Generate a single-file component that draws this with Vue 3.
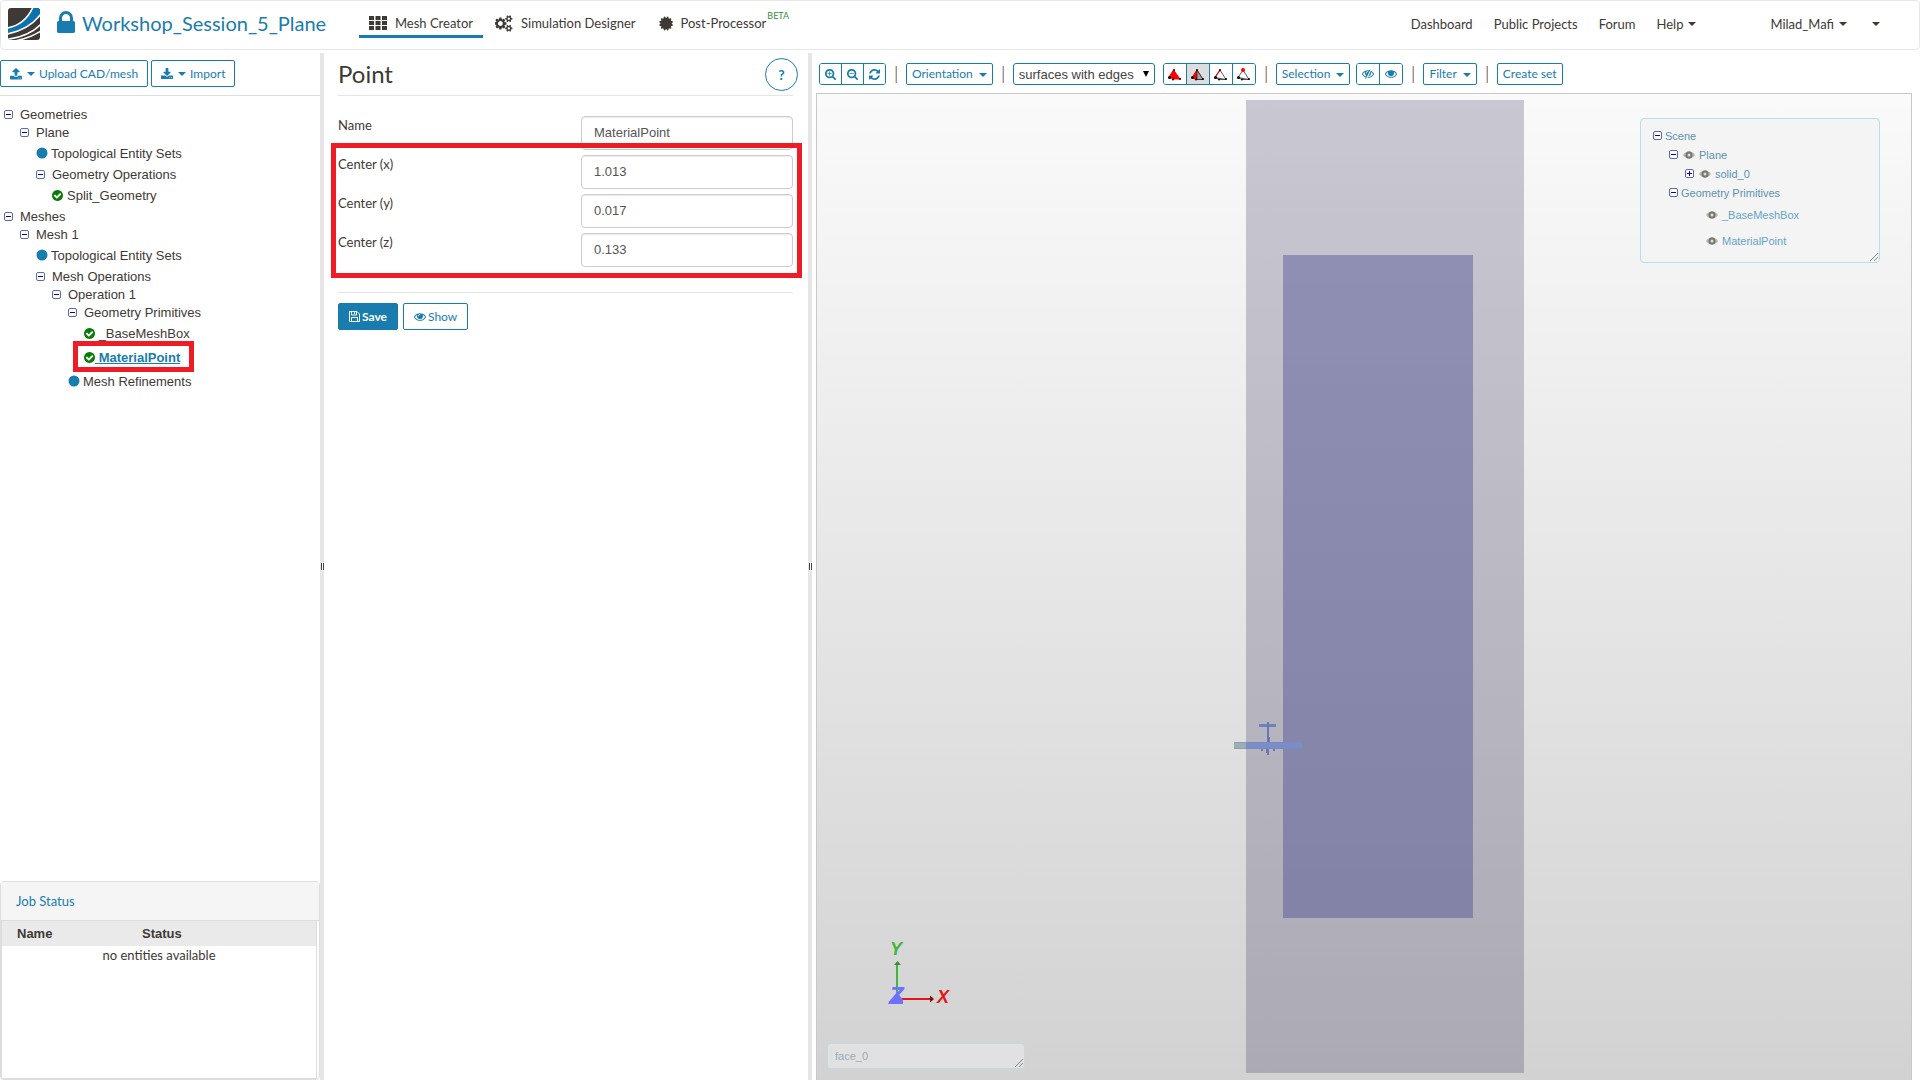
<script setup>
import { ref } from 'vue'

const icons = {
  lock: 'M640 768h512v-192q0-106-75-181t-181-75-181 75-75 181v192zm832 96v576q0 40-28 68t-68 28h-960q-40 0-68-28t-28-68v-576q0-40 28-68t68-28h32v-192q0-184 132-316t316-132 316 132 132 316v192h32q40 0 68 28t28 68z',
  cogs: 'M832 896q0-106-75-181t-181-75-181 75-75 181 75 181 181 75 181-75 75-181zm768 512q0-52-38-90t-90-38-90 38-38 90q0 53 37.5 90.5t90.5 37.5 90.5-37.5 37.5-90.5zm0-1024q0-52-38-90t-90-38-90 38-38 90q0 53 37.5 90.5t90.5 37.5 90.5-37.5 37.5-90.5zm-384 421v185q0 10-7 19.5t-16 10.5l-155 24q-11 35-32 76 34 48 90 115 7 11 7 20 0 12-7 19-23 30-82.5 89.5t-78.5 59.5q-11 0-21-7l-115-90q-37 19-77 31-11 108-23 155-7 24-30 24h-186q-11 0-20-7.5t-10-17.5l-23-153q-34-10-75-31l-118 89q-7 7-20 7-11 0-21-8-144-133-144-160 0-9 7-19 10-14 41-53t47-61q-23-44-35-82l-152-24q-10-1-17-9.5t-7-19.5v-185q0-10 7-19.5t16-10.5l155-24q11-35 32-76-34-48-90-115-7-11-7-20 0-12 7-20 22-30 82-89t79-59q11 0 21 7l115 90q34-18 77-32 11-108 23-154 7-24 30-24h186q11 0 20 7.5t10 17.5l23 153q34 10 75 31l118-89q8-7 20-7 11 0 21 8 144 133 144 160 0 8-7 19-12 16-42 54t-45 60q23 48 34 82l152 23q10 2 17 10.5t7 19.5zm640 533v140q0 16-149 31-12 27-30 52 51 113 51 138 0 4-4 7-122 71-124 71-8 0-46-47t-52-68q-20 2-30 2t-30-2q-14 21-52 68t-46 47q-2 0-124-71-4-3-4-7 0-25 51-138-18-25-30-52-149-15-149-31v-140q0-16 149-31 13-29 30-52-51-113-51-138 0-4 4-7 4-2 35-20t59-34 30-16q8 0 46 46.5t52 67.5q20-2 30-2t30 2q51-71 92-112l6-2q4 0 124 70 4 3 4 7 0 25-51 138 17 23 30 52 149 15 149 31zm0-1024v140q0 16-149 31-12 27-30 52 51 113 51 138 0 4-4 7-122 71-124 71-8 0-46-47t-52-68q-20 2-30 2t-30-2q-14 21-52 68t-46 47q-2 0-124-71-4-3-4-7 0-25 51-138-18-25-30-52-149-15-149-31v-140q0-16 149-31 13-29 30-52-51-113-51-138 0-4 4-7 4-2 35-20t59-34 30-16q8 0 46 46.5t52 67.5q20-2 30-2t30 2q51-71 92-112l6-2q4 0 124 70 4 3 4 7 0 25-51 138 17 23 30 52 149 15 149 31z',
  certificate: 'M1568 896l138 135q30 28 20 70-12 41-52 51l-188 48 53 186q12 41-19 70-29 31-70 19l-186-53-48 188q-10 40-51 52-12 2-19 2-31 0-51-22l-135-138-135 138q-28 30-70 20-41-11-51-52l-48-188-186 53q-41 12-70-19-31-29-19-70l53-186-188-48q-40-10-52-51-10-42 20-70l138-135-138-135q-30-28-20-70 12-41 52-51l188-48-53-186q-12-41 19-70 29-31 70-19l186 53 48-188q10-41 51-51 41-12 70 19l135 139 135-139q29-30 70-19 41 10 51 51l48 188 186-53q41-12 70 19 31 29 19 70l-53 186 188 48q40 10 52 51 10 42-20 70z',
  upload: 'M1344 1472q0-26-19-45t-45-19-45 19-19 45 19 45 45 19 45-19 19-45zm256 0q0-26-19-45t-45-19-45 19-19 45 19 45 45 19 45-19 19-45zm128-224v320q0 40-28 68t-68 28h-1472q-40 0-68-28t-28-68v-320q0-40 28-68t68-28h427q21 56 70.5 92t110.5 36h256q61 0 110.5-36t70.5-92h427q40 0 68 28t28 68zm-325-648q-17 40-59 40h-256v448q0 26-19 45t-45 19h-256q-26 0-45-19t-19-45v-448h-256q-42 0-59-40-17-39 14-69l448-448q18-19 45-19t45 19l448 448q31 30 14 69z',
  download: 'M1344 1344q0-26-19-45t-45-19-45 19-19 45 19 45 45 19 45-19 19-45zm256 0q0-26-19-45t-45-19-45 19-19 45 19 45 45 19 45-19 19-45zm128-224v320q0 40-28 68t-68 28h-1472q-40 0-68-28t-28-68v-320q0-40 28-68t68-28h465l135 136q58 56 136 56t136-56l136-136h464q40 0 68 28t28 68zm-325-569q17 41-14 70l-448 448q-18 19-45 19t-45-19l-448-448q-31-29-14-70 17-39 59-39h256v-448q0-26 19-45t45-19h256q26 0 45 19t19 45v448h256q42 0 59 39z',
  eye: 'M1664 960q-152-236-381-353 61 104 61 225 0 185-131.5 316.5t-316.5 131.5-316.5-131.5-131.5-316.5q0-121 61-225-229 117-381 353 133 205 333.5 326.5t434.5 121.5 434.5-121.5 333.5-326.5zm-720-384q0-20-14-34t-34-14q-125 0-214.5 89.5t-89.5 214.5q0 20 14 34t34 14 34-14 14-34q0-86 61-147t147-61q20 0 34-14t14-34zm848 384q0 34-20 69-140 230-376.5 368.5t-499.5 138.5-499.5-139-376.5-368q-20-35-20-69t20-69q140-229 376.5-368t499.5-139 499.5 139 376.5 368q20 35 20 69z',
  refresh: 'M1639 1056q0 5-1 7-64 268-268 434.5t-478 166.5q-146 0-282.5-55t-243.5-157l-129 129q-19 19-45 19t-45-19-19-45v-448q0-26 19-45t45-19h448q26 0 45 19t19 45-19 45l-137 137q71 66 161 102t187 36q134 0 250-65t186-179q11-17 53-117 8-23 30-23h192q13 0 22.5 9.5t9.5 22.5zm25-800v448q0 26-19 45t-45 19h-448q-26 0-45-19t-19-45 19-45l138-138q-148-137-349-137-134 0-250 65t-186 179q-11 17-53 117-8 23-30 23h-199q-13 0-22.5-9.5t-9.5-22.5v-7q65-268 270-434.5t480-166.5q146 0 284 55.5t245 156.5l130-129q19-19 45-19t45 19 19 45z',
  zoomIn: 'M1088 800v64q0 13-9.5 22.5t-22.5 9.5h-224v224q0 13-9.5 22.5t-22.5 9.5h-64q-13 0-22.5-9.5t-9.5-22.5v-224h-224q-13 0-22.5-9.5t-9.5-22.5v-64q0-13 9.5-22.5t22.5-9.5h224v-224q0-13 9.5-22.5t22.5-9.5h64q13 0 22.5 9.5t9.5 22.5v224h224q13 0 22.5 9.5t9.5 22.5zm128 32q0-185-131.5-316.5t-316.5-131.5-316.5 131.5-131.5 316.5 131.5 316.5 316.5 131.5 316.5-131.5 131.5-316.5zm512 832q0 53-37.5 90.5t-90.5 37.5q-54 0-90-38l-343-342q-179 124-399 124-143 0-273.5-55.5t-225-150-150-225-55.5-273.5 55.5-273.5 150-225 225-150 273.5-55.5 273.5 55.5 225 150 150 225 55.5 273.5q0 220-124 399l343 343q37 37 37 90z',
  zoomOut: 'M1088 800v64q0 13-9.5 22.5t-22.5 9.5h-576q-13 0-22.5-9.5t-9.5-22.5v-64q0-13 9.5-22.5t22.5-9.5h576q13 0 22.5 9.5t9.5 22.5zm128 32q0-185-131.5-316.5t-316.5-131.5-316.5 131.5-131.5 316.5 131.5 316.5 316.5 131.5 316.5-131.5 131.5-316.5zm512 832q0 53-37.5 90.5t-90.5 37.5q-54 0-90-38l-343-342q-179 124-399 124-143 0-273.5-55.5t-225-150-150-225-55.5-273.5 55.5-273.5 150-225 225-150 273.5-55.5 273.5 55.5 225 150 150 225 55.5 273.5q0 220-124 399l343 343q37 37 37 90z',
  check: 'M1412 734q0-28-18-46l-91-90q-19-19-45-19t-45 19l-408 407-226-226q-19-19-45-19t-45 19l-91 90q-18 18-18 46 0 27 18 45l362 362q19 19 45 19 27 0 46-19l543-543q18-18 18-45zm252 162q0 209-103 385.5t-279.5 279.5-385.5 103-385.5-103-279.5-279.5-103-385.5 103-385.5 279.5-279.5 385.5-103 385.5 103 279.5 279.5 103 385.5z',
}

const tree = [
  { label: 'Geometries', level: 0, kind: 'folder' },
  { label: 'Plane', level: 1, kind: 'folder' },
  { label: 'Topological Entity Sets', level: 2, kind: 'dot' },
  { label: 'Geometry Operations', level: 2, kind: 'folder' },
  { label: 'Split_Geometry', level: 3, kind: 'check' },
  { label: 'Meshes', level: 0, kind: 'folder' },
  { label: 'Mesh 1', level: 1, kind: 'folder' },
  { label: 'Topological Entity Sets', level: 2, kind: 'dot' },
  { label: 'Mesh Operations', level: 2, kind: 'folder' },
  { label: 'Operation 1', level: 3, kind: 'folder' },
  { label: 'Geometry Primitives', level: 4, kind: 'folder' },
  { label: '_BaseMeshBox', level: 5, kind: 'check' },
  { label: 'MaterialPoint', level: 5, kind: 'check', selected: true },
  { label: 'Mesh Refinements', level: 4, kind: 'dot' },
]

const scene = [
  { label: 'Scene', level: 0, toggle: 'minus' },
  { label: 'Plane', level: 1, toggle: 'minus', eye: true },
  { label: 'solid_0', level: 2, toggle: 'plus', eye: true },
  { label: 'Geometry Primitives', level: 1, toggle: 'minus' },
  { label: '_BaseMeshBox', level: 2, eye: true, leaf: true },
  { label: 'MaterialPoint', level: 2, eye: true, leaf: true },
]

const name = ref('MaterialPoint')
const center = ref([
  { axis: 'x', value: '1.013' },
  { axis: 'y', value: '0.017' },
  { axis: 'z', value: '0.133' },
])
const mode = ref('surfaces with edges')
const picks = ['volume', 'face', 'edge', 'vertex']
const pick = ref('face')
</script>

<template>
  <div class="app">
    <header class="topbar">
      <svg class="logo" viewBox="0 0 32 32" aria-hidden="true">
        <defs><clipPath id="logo-clip"><rect width="32" height="32" rx="3" /></clipPath></defs>
        <g clip-path="url(#logo-clip)">
          <rect width="32" height="32" fill="#3e3935" />
          <path d="M0 20Q17 17 25 0H33V6Q21 21 0 25Z" fill="#0b74b0" />
          <path d="M-1 20Q17 17 25 -1M-1 26Q21 22 33 6M-1 31.500Q22 28 33 16M7 33Q22 30 33 23" fill="none" stroke="#fff" stroke-width="1.600" />
        </g>
      </svg>
      <svg class="lock" viewBox="320 128 1152 1408" aria-hidden="true"><path :d="icons.lock" /></svg>
      <a class="project" href="#">Workshop_Session_5_Plane</a>

      <nav class="tabs">
        <a class="tab active" href="#">
          <svg width="18" height="14" viewBox="0 0 18 14" aria-hidden="true"><path d="M0 0h5v4H0zM6.500 0h5v4h-5zM13 0h5v4h-5zM0 5h5v4H0zM6.500 5h5v4h-5zM13 5h5v4h-5zM0 10h5v4H0zM6.500 10h5v4h-5zM13 10h5v4h-5z" /></svg>
          <span>Mesh Creator</span>
        </a>
        <a class="tab" href="#">
          <svg width="18" height="17" viewBox="0 0 1920 1792" aria-hidden="true"><path :d="icons.cogs" /></svg>
          <span>Simulation Designer</span>
        </a>
        <a class="tab" href="#">
          <svg width="15" height="15" viewBox="64 64 1664 1664" aria-hidden="true"><path :d="icons.certificate" /></svg>
          <span>Post-Processor</span><span class="beta">BETA</span>
        </a>
      </nav>

      <nav class="links">
        <a href="#">Dashboard</a>
        <a href="#">Public Projects</a>
        <a href="#">Forum</a>
        <a href="#" class="help-link">Help<i class="caret"></i></a>
        <a href="#">Milad_Mafi<i class="caret"></i></a>
        <a href="#" class="more" aria-label="More"><i class="caret"></i></a>
      </nav>
    </header>

    <main class="workspace">
      <aside class="sidebar">
        <div class="side-actions">
          <button class="btn" type="button">
            <svg width="12" height="12" viewBox="64 64 1664 1664" aria-hidden="true"><path :d="icons.upload" /></svg><i class="caret"></i>Upload CAD/mesh
          </button>
          <button class="btn" type="button">
            <svg width="12" height="12" viewBox="64 0 1664 1664" aria-hidden="true"><path :d="icons.download" /></svg><i class="caret"></i>Import
          </button>
        </div>
        <ul class="tree">
          <li v-for="(node, i) in tree" :key="i" :class="node.kind" :style="{ paddingLeft: node.level * 16 + 'px' }">
            <svg v-if="node.kind === 'folder'" class="toggle" viewBox="0 0 9 9" aria-hidden="true">
              <rect x=".5" y=".5" width="8" height="8" rx="1.500" /><path d="M2 4.500h5" />
            </svg>
            <svg v-else-if="node.kind === 'dot'" class="mark dot-mark" viewBox="0 0 12 12" aria-hidden="true"><circle cx="6" cy="6" r="5.500" /></svg>
            <svg v-else class="mark check-mark" viewBox="128 128 1536 1536" aria-hidden="true"><path :d="icons.check" /></svg>
            <a href="#" :class="{ selected: node.selected }"><span v-if="node.level === 5">&nbsp;</span>{{ node.label }}</a>
            <i v-if="node.selected" class="callout"></i>
          </li>
        </ul>
        <section class="jobs">
          <h2>Job Status</h2>
          <div class="jobs-body">
            <table>
              <thead><tr><th class="col-name">Name</th><th>Status</th></tr></thead>
              <tbody><tr><td colspan="2">no entities available</td></tr></tbody>
            </table>
          </div>
        </section>
      </aside>

      <div class="splitter"><i></i></div>

      <section class="editor">
        <div class="editor-head">
          <h1>Point</h1>
          <button class="help" type="button">?</button>
        </div>
        <form @submit.prevent>
          <div class="field">
            <label for="name">Name</label>
            <input id="name" v-model="name" type="text" />
          </div>
          <div class="center-fields">
            <div v-for="c in center" :key="c.axis" class="field">
              <label :for="'center-' + c.axis">Center ({{ c.axis }})</label>
              <input :id="'center-' + c.axis" v-model="c.value" type="text" />
            </div>
            <i class="callout"></i>
          </div>
          <div class="form-actions">
            <button class="btn primary" type="submit">
              <svg width="11" height="11" viewBox="0 0 11 11" aria-hidden="true"><path d="M.5.5h7.500l2.500 2.500v7.500H.5zM2.500.5v3.500h5V.5M5.500 1v2M2.500 10.500v-4h6v4" fill="none" stroke="#fff" /></svg>Save
            </button>
            <button class="btn show" type="button">
              <svg width="12" height="12" viewBox="0 64 1792 1792" aria-hidden="true"><path :d="icons.eye" /></svg>Show
            </button>
          </div>
        </form>
      </section>

      <div class="splitter"><i></i></div>

      <section class="viewer">
        <div class="toolbar">
          <div class="group zooms">
            <button type="button" aria-label="Zoom in"><svg viewBox="64 128 1664 1664"><path :d="icons.zoomIn" /></svg></button>
            <button type="button" aria-label="Zoom out"><svg viewBox="64 128 1664 1664"><path :d="icons.zoomOut" /></svg></button>
            <button type="button" aria-label="Reset"><svg viewBox="128 128 1536 1536"><path :d="icons.refresh" /></svg></button>
          </div>
          <i class="sep"></i>
          <button class="btn small" type="button">Orientation<i class="caret"></i></button>
          <i class="sep"></i>
          <div class="select">
            <select v-model="mode" aria-label="Render mode">
              <option>surfaces with edges</option>
              <option>surfaces</option>
              <option>wireframe</option>
            </select>
            <svg width="8" height="8" viewBox="0 0 8 8" aria-hidden="true"><path d="M0 0h8L4 8z" /></svg>
          </div>
          <div class="group picks">
            <button v-for="p in picks" :key="p" type="button" :class="{ on: p === pick }" :aria-label="'Pick ' + p" @click="pick = p">
              <svg viewBox="0 0 13 13" aria-hidden="true">
                <path v-if="p === 'volume'" d="M5.500 2L12 11H5L1 9z" fill="#f00" stroke="#f00" />
                <path v-else d="M6 2L12 11.500L5 11.500L1 9.500L6 2M1 9.500L12 11.500" fill="#fff" stroke="#333" stroke-width=".8" />
                <path v-if="p === 'face'" d="M6 2L1.500 9.500L6 11.500z" fill="#f00" stroke="#f00" />
                <path v-if="p === 'face'" d="M6 2V11.500L12 11.500z" fill="#aaa" stroke="#222" stroke-width=".8" />
                <path v-if="p === 'edge'" d="M6 2L1 9.500" stroke="#f00" stroke-width="1.200" />
                <circle cx="6" cy="2" :r="p === 'vertex' ? 2 : 1" :fill="p === 'vertex' ? '#f00' : '#000'" />
                <circle cx="1.500" cy="9.500" r="1.500" /><circle cx="5" cy="11.500" r="1" /><circle cx="12" cy="11" r="1" />
              </svg>
            </button>
          </div>
          <i class="sep"></i>
          <button class="btn small" type="button">Selection<i class="caret"></i></button>
          <div class="group eyes">
            <button type="button" aria-label="Hide selection"><svg viewBox="0 64 1792 1792"><path :d="icons.eye" /><path d="M1340 260L640 1660" stroke="#fff" stroke-width="200" /><path d="M1200 300L520 1640" stroke="#187cae" stroke-width="130" /></svg></button>
            <button type="button" aria-label="Show all"><svg viewBox="0 64 1792 1792"><path :d="icons.eye" /><circle cx="896" cy="860" r="370" /></svg></button>
          </div>
          <i class="sep"></i>
          <button class="btn small" type="button">Filter<i class="caret"></i></button>
          <i class="sep"></i>
          <button class="btn small" type="button">Create set</button>
        </div>

        <div class="canvas">
          <svg class="model" viewBox="0 0 1094 986" aria-label="Mesh view">
            <rect x="429" y="6" width="278" height="973" fill="#3a3860" fill-opacity=".26" />
            <rect x="466" y="161" width="190" height="663" fill="#41418c" fill-opacity=".4" />
            <g>
              <rect x="417" y="648" width="12" height="7" fill="#9aafb3" />
              <rect x="429" y="648" width="56" height="7" fill="#7b8dc8" />
              <path d="M417 648.500h68M417 654.500h68" stroke="#7886a8" stroke-opacity=".4" />
              <rect x="442" y="630" width="17" height="3" fill="#7080ba" />
              <path d="M450 628h2v15h1v5h-3zM449 655h3v6h-2v-2h-1z" fill="#6878b4" />
              <path d="M444 655h2v2h-2zM456 655h2v2h-2z" fill="#6878b4" />
            </g>
            <g class="axes">
              <path d="M80 905V870" stroke="#3cb83c" stroke-width="2" />
              <path d="M77 871l3.500-4 3.500 4z" fill="#3a8a3a" />
              <path d="M84 905h30" stroke="#e01818" stroke-width="2" />
              <path d="M113 901.500l4 3.500-4 3.500z" fill="#7a1010" />
              <path d="M80 898l6 8v4H71z" fill="#7070ff" />
              <text x="73" y="861" fill="#3cb83c">Y</text>
              <text x="120" y="909" fill="#e01818">X</text>
              <text class="z" x="72" y="910" fill="#7070ff">Z</text>
            </g>
          </svg>
          <div class="scene">
            <ul>
              <li v-for="(node, i) in scene" :key="i" :class="{ leaf: node.leaf }" :style="{ paddingLeft: node.level * 16 + 'px' }">
                <svg v-if="node.toggle" class="toggle" viewBox="0 0 9 9" aria-hidden="true">
                  <rect x=".5" y=".5" width="8" height="8" rx="1.500" /><path :d="node.toggle === 'plus' ? 'M2 4.500h5M4.500 2v5' : 'M2 4.500h5'" />
                </svg>
                <svg v-if="node.eye" class="eye" viewBox="0 0 12 8" aria-hidden="true"><path d="M0 4Q6 -3.500 12 4Q6 11.500 0 4Z" fill="#b5b5aa" /><circle cx="6" cy="4" r="2.500" fill="#ddd" stroke="#77776d" stroke-width="2" /></svg>
                <a href="#">{{ node.label }}</a>
              </li>
            </ul>
            <svg class="grip" viewBox="0 0 8 8" aria-hidden="true"><path d="M0 8L8 0M4 8L8 4" /></svg>
          </div>
          <div class="picked">
            face_0
            <svg class="grip" viewBox="0 0 8 8" aria-hidden="true"><path d="M0 8L8 0M4 8L8 4" /></svg>
          </div>
        </div>
      </section>
    </main>
  </div>
</template>

<style>
body {
  margin: 0;
  background: #fff;
}
</style>

<style scoped>
.app {
  display: flex;
  flex-direction: column;
  height: 100vh;
  overflow: hidden;
  font-family: Lato, "Liberation Sans", sans-serif;
  font-size: 13px;
  color: #3e3935;
}
.app *, .app *::before {
  box-sizing: border-box;
}
a {
  color: inherit;
  text-decoration: none;
}
button, input, select {
  font-family: inherit;
  margin: 0;
}
ul {
  list-style: none;
  margin: 0;
  padding: 0;
}
svg {
  flex: none;
  display: block;
}
.caret {
  display: inline-block;
  flex: none;
  border: 4px solid transparent;
  border-top-color: currentColor;
  border-bottom: 0;
}

.topbar {
  display: flex;
  align-items: flex-start;
  flex: none;
  height: 50px;
  padding: 7px 39px 0 7px;
  border: 1px solid #e7e7e7;
  border-radius: 4px;
}
.logo {
  width: 32px;
  height: 32px;
}
.lock {
  width: 18px;
  height: 22px;
  margin: 3px 7px 0 17px;
  fill: #187cae;
}
.project {
  width: 277px;
  font-size: 20px;
  line-height: 30px;
  color: #187cae;
}
.tabs {
  display: flex;
  gap: 2px;
}
.tab {
  display: flex;
  align-items: center;
  gap: 8px;
  height: 30px;
  padding: 3px 10px 0;
  border-bottom: 3px solid transparent;
  line-height: 24px;
}
.tab svg {
  fill: #3e3935;
}
.tab.active {
  border-bottom-color: #187cae;
}
.beta {
  align-self: flex-start;
  margin: -2px 0 0 -7px;
  font-size: 9px;
  line-height: 14px;
  color: #3c8a3c;
}
.links {
  display: flex;
  gap: 21px;
  margin-left: auto;
  line-height: 32px;
}
.links a {
  display: flex;
  align-items: center;
  gap: 5px;
}
.help-link {
  margin-right: 53px;
}
.more {
  margin-left: 4px;
}

.workspace {
  display: flex;
  flex: 1;
  min-height: 0;
  padding-top: 3px;
}
.sidebar {
  display: flex;
  flex-direction: column;
  flex: 0 0 320px;
}
.side-actions {
  display: flex;
  gap: 3px;
  padding: 7px 0 8px;
  border-bottom: 1px solid #ddd;
}
.btn {
  display: flex;
  align-items: center;
  height: 27px;
  padding: 0 10px;
  border: 1px solid #187cae;
  border-radius: 2px;
  background: #fff;
  color: #187cae;
  font-size: 12px;
  line-height: 18px;
  white-space: nowrap;
}
.btn svg {
  fill: currentColor;
}
.side-actions .btn {
  padding: 0 9px;
}
.side-actions .caret {
  margin: 1px 4px 0 5px;
}

.tree {
  padding: 9px 0 0 4px;
  font: 13px "Liberation Sans", Arial, sans-serif;
}
.tree li {
  position: relative;
  display: flex;
  align-items: center;
  height: 24px;
  width: max-content;
}
.tree .folder {
  height: 18px;
}
.toggle {
  width: 9px;
  height: 9px;
  margin-right: 7px;
  fill: #fff;
  stroke: #5a6ab0;
}
.toggle path {
  stroke: #0000c8;
}
.mark {
  width: 11px;
  height: 11px;
  margin-right: 4px;
}
.dot-mark {
  width: 12px;
  height: 12px;
  margin-right: 3px;
  fill: #187cae;
}
.check-mark {
  fill: #087c08;
}
.tree li a span {
  margin-left: -4px;
}
.tree .selected {
  color: #187cae;
  font-weight: bold;
  text-decoration: underline;
}
.callout {
  position: absolute;
  border: 5px solid #ee1c25;
  pointer-events: none;
}
.tree .callout {
  inset: -4px -14px -3px 69px;
}

.jobs {
  display: flex;
  flex-direction: column;
  height: 199px;
  margin-top: auto;
  border: 1px solid #ddd;
  border-radius: 4px;
}
.jobs h2 {
  flex: none;
  height: 39px;
  margin: 0;
  padding-left: 15px;
  border-bottom: 1px solid #ddd;
  background: #f5f5f5;
  color: #187cae;
  font-size: 13px;
  font-weight: normal;
  line-height: 38px;
}
.jobs-body {
  flex: 1;
  margin-right: 2px;
  border: 1px solid #ddd;
  border-top-width: 0;
}
.jobs table {
  width: 100%;
  border-collapse: collapse;
}
.jobs th {
  height: 25px;
  padding: 0;
  background: #eaeaea;
  font: bold 13px "Liberation Sans", Arial, sans-serif;
  text-align: left;
}
.jobs .col-name {
  width: 140px;
  padding-left: 15px;
}
.jobs td {
  padding: 0;
  line-height: 18px;
  text-align: center;
}

.splitter {
  display: flex;
  align-items: center;
  flex: 0 0 4px;
  background: #e6e6e6;
}
.splitter i {
  width: 3px;
  height: 7px;
  margin-left: 1px;
  border: solid #444;
  border-width: 0 1px;
  background: #fff;
}

.editor {
  flex: 0 0 484px;
  padding: 0 15px 0 14px;
}
.editor-head {
  display: flex;
  justify-content: space-between;
  height: 43px;
  border-bottom: 1px solid #e5e5e5;
}
.editor h1 {
  margin: 0;
  font-size: 24px;
  font-weight: normal;
  line-height: 42px;
}
.help {
  flex: none;
  width: 33px;
  height: 33px;
  margin: 5px -5px 0 0;
  padding: 0;
  border: 1px solid #187cae;
  border-radius: 50%;
  background: #fff;
  color: #187cae;
  font-size: 14px;
  font-weight: bold;
}
.editor form {
  padding-top: 20px;
}
.field {
  display: flex;
  justify-content: space-between;
  margin-bottom: 5px;
}
.field label {
  line-height: 19px;
}
.field input {
  width: 212px;
  height: 34px;
  padding: 0 12px 2px;
  border: 1px solid #ccc;
  border-radius: 4px;
  box-shadow: inset 0 1px 1px rgba(0, 0, 0, .08);
  background: #fff;
  color: #555;
  font: 13px "Liberation Sans", Arial, sans-serif;
}
.center-fields {
  display: flow-root;
  position: relative;
}
.center-fields .callout {
  inset: -12px -9px -6px -7px;
}
.form-actions {
  display: flex;
  gap: 5px;
  margin-top: 20px;
  padding-top: 10px;
  border-top: 1px solid #e5e5e5;
}
.form-actions .btn {
  gap: 2px;
}
.btn.primary {
  background: #187cae;
  color: #fff;
  font-weight: bold;
}

.viewer {
  display: flex;
  flex-direction: column;
  flex: 1;
  min-width: 0;
  padding: 0 8px 0 4px;
}
.toolbar {
  display: flex;
  align-items: center;
  flex: none;
  height: 40px;
  padding: 2px 0 0 3px;
}
.btn.small {
  height: 22px;
  padding: 0 5px;
}
.small .caret {
  margin: 1px 0 0 6px;
}
.sep {
  flex: none;
  width: 2px;
  height: 17px;
  margin: 0 9px;
  border-left: 1px solid #ecc9a8;
  border-right: 1px solid #9292b0;
}
.group {
  display: flex;
  flex: none;
  width: 67px;
  height: 22px;
  border: 1px solid #187cae;
  border-radius: 3px;
  overflow: hidden;
}
.group button {
  display: flex;
  align-items: center;
  justify-content: center;
  flex: 1;
  padding: 0;
  border: 0;
  background: #fff;
}
.group button + button {
  border-left: 1px solid #187cae;
}
.group svg {
  width: 11px;
  height: 11px;
  fill: #187cae;
}
.group.picks {
  width: 93px;
  margin-left: 8px;
}
.group .on {
  background: #ddd;
}
.picks svg {
  width: 13px;
  height: 13px;
  fill: #000;
}
.group.eyes {
  width: 47px;
  margin-left: 6px;
}
.eyes svg {
  width: 12px;
  height: 12px;
}
.select {
  position: relative;
  width: 142px;
}
.select select {
  display: block;
  width: 100%;
  height: 22px;
  padding: 0 5px;
  border: 1px solid #187cae;
  border-radius: 3px;
  background: #fff;
  appearance: none;
  color: #444;
  font: 13px "Liberation Sans", Arial, sans-serif;
}
.select svg {
  position: absolute;
  right: 6px;
  top: 7px;
  width: 6px;
  pointer-events: none;
}

.canvas {
  position: relative;
  flex: 1;
  min-height: 0;
  border: 1px solid #c8c8c8;
  border-bottom: 0;
  background: linear-gradient(#fafafa, #d2d2d2);
}
.model {
  width: 100%;
  height: 100%;
}
.axes text {
  font: italic bold 18px "Liberation Sans", Arial, sans-serif;
}
.axes .z {
  font-size: 24px;
}
.scene {
  position: absolute;
  top: 24px;
  right: 31px;
  width: 240px;
  height: 145px;
  padding: 7px 12px;
  border: 1px solid #b5dfe8;
  border-radius: 4px;
  background: #f4f4f4;
  color: #5b93b0;
  font: 11px "Liberation Sans", Arial, sans-serif;
}
.scene li {
  display: flex;
  align-items: center;
  height: 19px;
}
.scene .leaf {
  height: 26px;
}
.scene .toggle {
  margin-right: 3px;
}
.eye {
  width: 12px;
  height: 8px;
  margin: 0 4px 0 2px;
}
.leaf .eye {
  margin-left: 21px;
}
.leaf a {
  color: #64a5c8;
}
.grip {
  position: absolute;
  right: 1px;
  bottom: 1px;
  width: 8px;
  height: 8px;
  stroke: #888;
  fill: none;
}
.picked {
  position: absolute;
  left: 10px;
  bottom: 11px;
  width: 198px;
  height: 26px;
  padding-left: 7px;
  border: 1px solid #c6d8e0;
  border-radius: 3px;
  background: #e1e1e1;
  color: #93adba;
  font: 11px/25px "Liberation Sans", Arial, sans-serif;
}
</style>
